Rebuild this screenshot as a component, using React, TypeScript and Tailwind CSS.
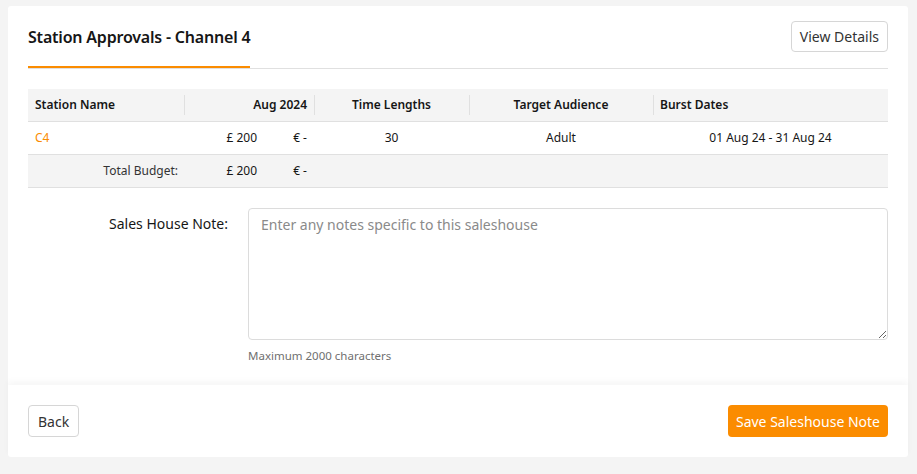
import React from 'react';

const font = { fontFamily: '"Noto Sans", "Open Sans", Arial, sans-serif' };

const HeaderCell: React.FC<{ className?: string; sep?: boolean; children: React.ReactNode }> = ({ className = '', sep = true, children }) => (
  <div className={`relative flex items-center h-full px-[7px] ${className}`}>
    {sep && <span className="absolute left-0 top-[6px] bottom-[6px] w-px bg-[#e0e0e0]" />}
    {children}
  </div>
);

const cols = 'grid grid-cols-[156px_80px_50px_155px_184px_1fr]';

const App: React.FC = () => {
  return (
    <div className="min-h-screen bg-[#f4f4f4] pl-2 pt-[6px] text-[#161616]" style={font}>
      <div className="w-[900px] bg-white rounded-[3px]">
        <div className="px-5 pt-[15px]">
          {/* header */}
          <div className="flex items-end justify-between border-b border-[#e0e0e0]">
            <h1 className="text-[16px] leading-6 font-semibold tracking-[-0.2px] border-b-2 border-[#fb8c00] pb-[17px] mt-[4px]">
              Station Approvals - Channel 4
            </h1>
            <button className="mb-[16px] h-[31px] px-[8px] rounded-[4px] border border-[#d6d6d6] bg-white text-[14px] text-[#333]">
              View Details
            </button>
          </div>

          {/* table */}
          <div className="mt-5 text-[12px]">
            <div className={`${cols} h-[33px] bg-[#f4f4f4] border-b border-[#e0e0e0] font-semibold`}>
              <HeaderCell sep={false}>Station Name</HeaderCell>
              <div className="col-span-2 h-full">
                <HeaderCell className="justify-end">Aug 2024</HeaderCell>
              </div>
              <HeaderCell className="justify-center">Time Lengths</HeaderCell>
              <HeaderCell className="justify-center">Target Audience</HeaderCell>
              <HeaderCell>Burst Dates</HeaderCell>
            </div>
            <div className={`${cols} h-[33px] items-center border-b border-[#e0e0e0]`}>
              <div className="px-[7px] text-[#fb8c00]">C4</div>
              <div className="px-[7px] text-right">£ 200</div>
              <div className="px-[7px] text-right">€ -</div>
              <div className="px-[7px] text-center">30</div>
              <div className="px-[7px] text-center">Adult</div>
              <div className="px-[7px] text-center">01 Aug 24 - 31 Aug 24</div>
            </div>
            <div className={`${cols} h-[33px] items-center bg-[#f4f4f4] border-b border-[#e0e0e0] text-[#333]`}>
              <div className="px-[6px] text-right">Total Budget:</div>
              <div className="px-[7px] text-right text-[#161616]">£ 200</div>
              <div className="px-[7px] text-right text-[#161616]">€ -</div>
              <div />
              <div />
              <div />
            </div>
          </div>

          {/* note */}
          <div className="flex mt-5 pb-[21px]">
            <label className="w-[220px] shrink-0 pr-5 text-right text-[14px] leading-5 pt-[6px]">Sales House Note:</label>
            <div className="flex-1">
              <textarea
                className="block w-full h-[132px] rounded-[4px] border border-[#dcdcdc] px-3 py-[6px] text-[14px] leading-5 placeholder:text-[#8a8a8a] outline-none"
                style={font}
                placeholder="Enter any notes specific to this saleshouse"
              />
              <p className="mt-2 text-[11.5px] leading-4 text-[#6f6f6f]">Maximum 2000 characters</p>
            </div>
          </div>
        </div>

        {/* footer */}
        <div className="flex items-center justify-between px-5 pt-[20px] pb-5 shadow-[0_-4px_6px_rgba(0,0,0,0.035)]">
          <button className="h-[32px] px-[9px] rounded-[4px] border border-[#d6d6d6] bg-white text-[14px] text-[#333]">
            Back
          </button>
          <button className="h-[32px] px-[8px] rounded-[4px] bg-[#fb8c00] text-[14px] text-white">
            Save Saleshouse Note
          </button>
        </div>
      </div>
    </div>
  );
};

export default App;
